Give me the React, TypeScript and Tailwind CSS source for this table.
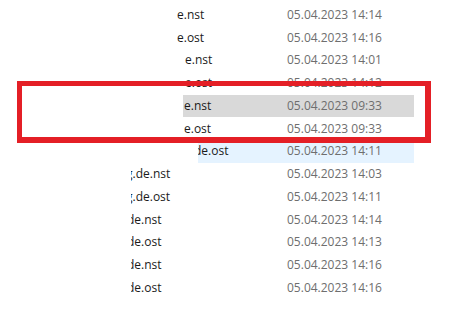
import React from "react";

type Row = {
  wrap: string;
  nameW: string;
  name: string;
  cut: string;
  date: string;
  bg: string;
};

const rows: Row[] = [
  { wrap: "ml-[177px] w-[237px]", nameW: "w-[110px]", name: "e.nst", cut: "", date: "05.04.2023 14:14", bg: "" },
  { wrap: "ml-[177px] w-[237px]", nameW: "w-[110px]", name: "e.ost", cut: "", date: "05.04.2023 14:16", bg: "" },
  { wrap: "ml-[185px] w-[229px]", nameW: "w-[102px]", name: "e.nst", cut: "", date: "05.04.2023 14:01", bg: "" },
  { wrap: "ml-[185px] w-[229px]", nameW: "w-[102px]", name: "e.ost", cut: "", date: "05.04.2023 14:12", bg: "" },
  { wrap: "ml-[183px] w-[231px]", nameW: "w-[104px]", name: "e.nst", cut: "ml-[1px]", date: "05.04.2023 09:33", bg: "bg-[#d9d9d9]" },
  { wrap: "ml-[183px] w-[231px]", nameW: "w-[104px]", name: "e.ost", cut: "ml-[1px]", date: "05.04.2023 09:33", bg: "" },
  { wrap: "ml-[198px] w-[216px]", nameW: "w-[89px]", name: "de.ost", cut: "-ml-[4px]", date: "05.04.2023 14:11", bg: "bg-[#e5f3ff]" },
  { wrap: "ml-[131px] w-[283px]", nameW: "w-[156px]", name: "g.de.nst", cut: "-ml-[5px]", date: "05.04.2023 14:03", bg: "" },
  { wrap: "ml-[131px] w-[283px]", nameW: "w-[156px]", name: "g.de.ost", cut: "-ml-[5px]", date: "05.04.2023 14:11", bg: "" },
  { wrap: "ml-[131px] w-[283px]", nameW: "w-[156px]", name: "de.nst", cut: "-ml-[4px]", date: "05.04.2023 14:14", bg: "" },
  { wrap: "ml-[131px] w-[283px]", nameW: "w-[156px]", name: "de.ost", cut: "-ml-[4px]", date: "05.04.2023 14:13", bg: "" },
  { wrap: "ml-[131px] w-[283px]", nameW: "w-[156px]", name: "de.nst", cut: "-ml-[4px]", date: "05.04.2023 14:16", bg: "" },
  { wrap: "ml-[131px] w-[283px]", nameW: "w-[156px]", name: "de.ost", cut: "-ml-[4px]", date: "05.04.2023 14:16", bg: "" },
];

export default function App() {
  return (
    <div
      className="relative w-[450px] h-[333px] bg-white overflow-hidden text-[12px]"
      style={{ fontFamily: '"Open Sans", "Noto Sans", sans-serif' }}
    >
      <div className="flex flex-col pt-[3.6px]">
        {rows.map((r, i) => (
          <div key={i} className="flex h-[22.75px]">
            <div className={`flex items-center ${r.wrap} ${r.bg}`}>
              <div className={`${r.nameW} overflow-hidden whitespace-nowrap text-[#1a1a1a]`}>
                <span className={`inline-block ${r.cut}`}>{r.name}</span>
              </div>
              <div className="whitespace-nowrap text-[#6e6e6e]">{r.date}</div>
            </div>
          </div>
        ))}
      </div>
      <div className="absolute left-[17px] top-[81px] w-[414px] h-[62px] border-[6px] border-l-[5px] border-t-[5px] border-[#e41f26]" />
    </div>
  );
}
